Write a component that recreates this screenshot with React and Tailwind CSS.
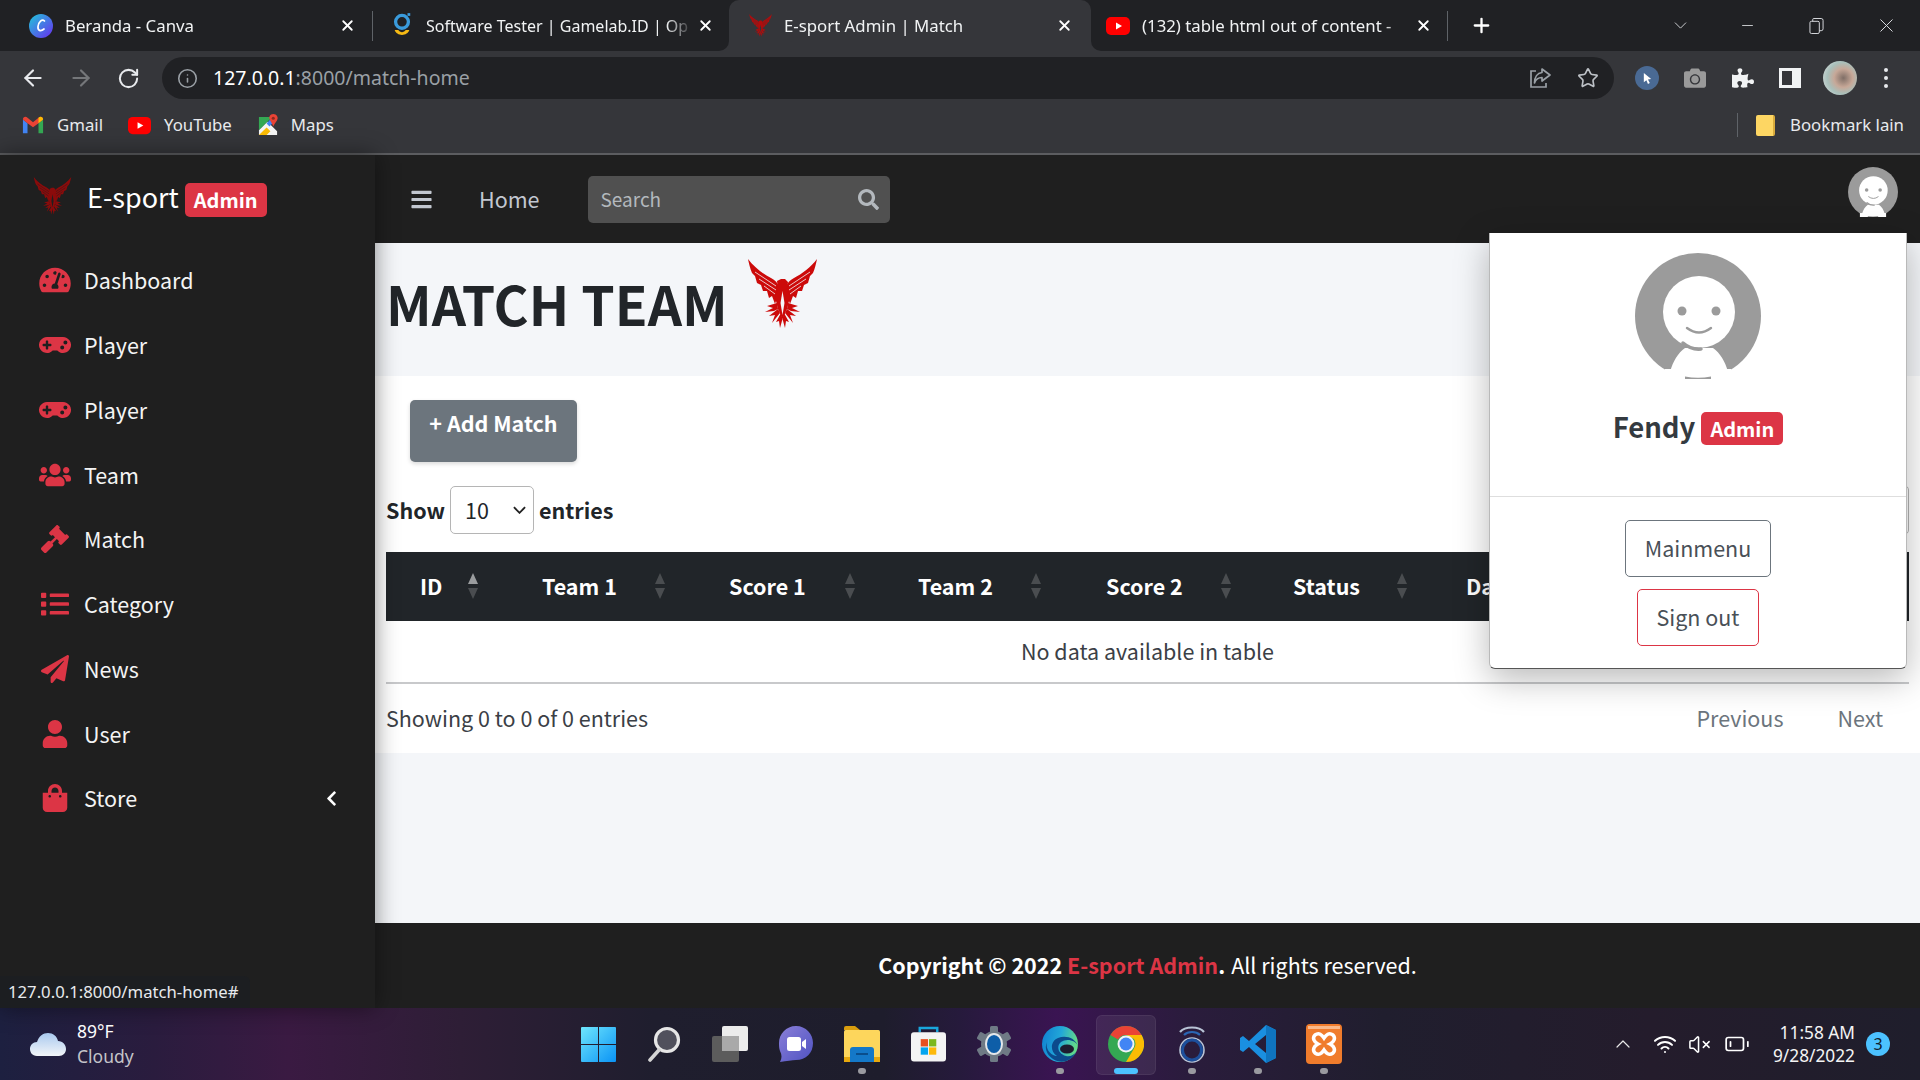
import {
  FaTachometerAlt, FaGamepad, FaUsers, FaGavel, FaList, FaPaperPlane, FaUser, FaShoppingBag,
  FaChevronLeft, FaBars, FaSearch, FaPuzzlePiece, FaCamera,
} from 'react-icons/fa';
import { ArrowLeft, ArrowRight, RotateCw, Info, Star, X, Plus, ChevronDown, Minus, Wifi, VolumeX, BatteryLow, ChevronUp } from 'lucide-react';

const MENU = [
  { label: 'Dashboard', icon: FaTachometerAlt },
  { label: 'Player', icon: FaGamepad },
  { label: 'Player', icon: FaGamepad },
  { label: 'Team', icon: FaUsers },
  { label: 'Match', icon: FaGavel },
  { label: 'Category', icon: FaList },
  { label: 'News', icon: FaPaperPlane },
  { label: 'User', icon: FaUser },
  { label: 'Store', icon: FaShoppingBag, arrow: true },
];

const COLUMNS = [
  { label: 'ID', w: 'w-[100px]', pl: 'pl-[34px]', active: true },
  { label: 'Team 1', w: 'w-[187px]', pl: 'pl-[56px]' },
  { label: 'Score 1', w: 'w-[190px]', pl: 'pl-[56px]' },
  { label: 'Team 2', w: 'w-[186px]', pl: 'pl-[55px]' },
  { label: 'Score 2', w: 'w-[190px]', pl: 'pl-[57px]' },
  { label: 'Status', w: 'w-[176px]', pl: 'pl-[54px]' },
  { label: 'Date', w: 'w-[176px]', pl: 'pl-[51px]' },
];

function Eagle({ color, slit, className }) {
  const wing = (
    <g>
      <path d="M0 0 C6 8 15 15 23 19 C27 21 30 24 31 28 L30 36 L27 45 L24 37 L21 39 L19 32 L15 32 L13 26 L9 24 L7 17 L4 14 C2 9 1 5 0 0Z" fill={color} />
      <path d="M7 13 L28 27 M11 20 L28 31 M16 27 L27 35" stroke={slit} strokeWidth="0.8" fill="none" />
      <path d="M29 44 L19 47 L25 49 L17 53 L26 52 L30 50Z" fill={color} />
      <path d="M30 50 L21 57 L27 56 L24 64 L32 54Z" fill={color} />
      <path d="M33 54 L28 63 L31 62 L32 69 L34.5 60Z" fill={color} />
    </g>
  );
  return (
    <svg viewBox="0 0 69 70" className={className}>
      {wing}
      <g transform="translate(69 0) scale(-1 1)">{wing}</g>
      <path d="M29 22 L33 20 L37 20 L40 23 L39 30 L42 38 L39 50 L34.5 60 L30 50 L27 38 L30 30Z" fill={color} />
      <path d="M34.5 32 L32.5 44 L34.5 56 L36.5 44Z" fill={slit} />
    </svg>
  );
}

function Avatar({ className }) {
  return (
    <svg viewBox="0 0 126 126" className={className}>
      <circle cx="63" cy="63" r="63" fill="#9b9b9b" />
      <path d="M35 119 C38 108 43 100 50 95 L78 95 C85 100 90 108 93 119 L96 126 L30 126Z" fill="#fff" />
      <path d="M30 116 L96 116 L96 126 L30 126Z" fill="#fff" />
      <path d="M50 123.5 Q63 126 76 123.5 L76 126 L50 126Z" fill="#9b9b9b" />
      <circle cx="64" cy="59" r="36" fill="#fff" />
      <circle cx="47" cy="58" r="4.5" fill="#9b9b9b" />
      <circle cx="81" cy="58" r="4.5" fill="#9b9b9b" />
      <path d="M52 75 Q64 84 76 75" stroke="#9b9b9b" strokeWidth="2.4" fill="none" strokeLinecap="round" />
      <path d="M48 90 Q56 97 66 96" stroke="#9b9b9b" strokeWidth="3.5" fill="none" strokeLinecap="round" />
    </svg>
  );
}

function Tab({ favicon, title, active, outer, inner, cornerL, cornerR, titleSize = 'text-[16.8px]' }) {
  return (
    <div className={`h-full bg-[#35363a] ${outer}`}>
      <div className={`h-full flex items-center ${active ? 'bg-[#35363a] rounded-t-[10px]' : 'bg-[#202124]'} ${cornerL ? 'rounded-bl-[10px]' : ''} ${cornerR ? 'rounded-br-[10px]' : ''} ${inner}`}>
        <span className="shrink-0 w-[24px] h-[24px] flex items-center justify-center">{favicon}</span>
        <span className={`ml-[12px] flex-1 whitespace-nowrap ${titleSize} text-[#f1f3f4] [mask-image:linear-gradient(to_right,black_90%,transparent_100%)]`}>{title}</span>
        <X className="shrink-0 ml-[4px] text-white" size={17} strokeWidth={2.6} />
      </div>
    </div>
  );
}

function SortIcon({ active }) {
  return (
    <svg viewBox="0 0 12 30" className="w-[12px] h-[30px] shrink-0 mr-[7px] mb-[2px]">
      <path d="M6 2 L11 13 L1 13Z" fill={active ? '#9a9c9e' : '#4a4d50'} />
      <path d="M1 17 L11 17 L6 28Z" fill="#4a4d50" />
    </svg>
  );
}

function CanvaIcon() {
  return (
    <svg viewBox="0 0 24 24" className="w-[24px] h-[24px]">
      <defs>
        <linearGradient id="canvaGrad" x1="0" y1="0" x2="1" y2="1">
          <stop offset="0" stopColor="#1fc8d9" />
          <stop offset="1" stopColor="#6a2cf0" />
        </linearGradient>
      </defs>
      <circle cx="12" cy="12" r="12" fill="url(#canvaGrad)" />
      <path d="M15.5 7 C13 4.5 9.5 8 9 12.5 C8.6 16.5 11.5 18 15 15" stroke="#fff" strokeWidth="1.7" fill="none" strokeLinecap="round" />
    </svg>
  );
}

function GamelabIcon() {
  return (
    <svg viewBox="0 0 24 26" className="w-[22px] h-[25px]">
      <circle cx="12" cy="9" r="7" stroke="#3a9bdc" strokeWidth="3.6" fill="none" />
      <path d="M18 1 L21 1" stroke="#3a9bdc" strokeWidth="3" />
      <path d="M4 18 C6 25 18 25 20 18 L16 18 C14 21 10 21 8 18Z" fill="#f5b914" />
    </svg>
  );
}

function YoutubeIcon({ small }) {
  return (
    <svg viewBox="0 0 24 24" className={small ? 'w-[23px] h-[23px]' : 'w-[24px] h-[24px]'}>
      <rect x="0" y="3" width="24" height="18" rx="5" fill="#f00" />
      <path d="M10 8.5 L16 12 L10 15.5Z" fill="#fff" />
    </svg>
  );
}

function GmailIcon() {
  return (
    <svg viewBox="0 0 24 20" className="w-[22px] h-[20px]">
      <path d="M1 4 L1 19 L6 19 L6 8Z" fill="#4285f4" />
      <path d="M18 8 L18 19 L23 19 L23 4Z" fill="#34a853" />
      <path d="M1 4 C1 1 4 0 6 2 L12 7 L18 2 C20 0 23 1 23 4 L18 8 L12 12.5 L6 8Z" fill="#ea4335" />
      <path d="M18 2 C20 0 23 1 23 4 L18 8Z" fill="#fbbc04" />
    </svg>
  );
}

function MapsIcon() {
  return (
    <svg viewBox="0 0 22 24" className="w-[21px] h-[23px]">
      <path d="M1 3 L15 3 L1 17Z" fill="#34a853" />
      <path d="M1 17 L10 8 L20 18 L20 22 L1 22Z" fill="#f5f5f5" />
      <path d="M1 22 L9 14 L13 18 L9 22Z" fill="#fbbc04" />
      <path d="M9 10 L15 3 L15 10 L12 13Z" fill="#4285f4" />
      <path d="M16 0 C12.5 0 11.5 3 12 5 C13 8 15 10 16 13 C17 10 20 8 20.5 5 C21 3 19.5 0 16 0Z" fill="#ea4335" />
      <circle cx="16" cy="4.5" r="1.6" fill="#8c2a20" />
    </svg>
  );
}

function ShareIcon() {
  return (
    <svg viewBox="0 0 24 24" className="ml-auto w-[24px] h-[24px]" fill="none" stroke="#9aa0a6" strokeWidth="1.7">
      <path d="M8 5 H3 V21 H18 V17" />
      <path d="M14 3 L22 9 L14 15 V11.5 C10 11.5 7.5 14 6.5 17 C6.5 11 9.5 7 14 6.5Z" strokeLinejoin="round" />
    </svg>
  );
}

function WindowsIcon() {
  return (
    <svg viewBox="0 0 35 35" className="w-[35px] h-[35px]">
      <defs>
        <linearGradient id="winGrad" x1="0" y1="0" x2="1" y2="1">
          <stop offset="0" stopColor="#6fe6fd" />
          <stop offset="1" stopColor="#0a93f5" />
        </linearGradient>
      </defs>
      <path d="M1 0 H17 V17 H0 V1 Q0 0 1 0Z M18 0 H34 Q35 0 35 1 V17 H18Z M0 18 H17 V35 H1 Q0 35 0 34Z M18 18 H35 V34 Q35 35 34 35 H18Z" fill="url(#winGrad)" />
    </svg>
  );
}

function SearchTaskIcon() {
  return (
    <svg viewBox="0 0 34 36" className="w-[34px] h-[36px]">
      <circle cx="20" cy="14" r="11.5" fill="#50505c" stroke="#e6e6e6" strokeWidth="3.2" />
      <path d="M12 24 L3 34" stroke="#d5d5d5" strokeWidth="3.6" strokeLinecap="round" />
    </svg>
  );
}

function TaskViewIcon() {
  return (
    <svg viewBox="0 0 36 36" className="w-[36px] h-[36px]">
      <rect x="0" y="10" width="27" height="26" rx="2" fill="#5c5c5c" />
      <rect x="10" y="0" width="26" height="25" rx="2" fill="#ececec" />
      <rect x="10" y="10" width="17" height="15" fill="#a9a9a9" />
    </svg>
  );
}

function ChatIcon() {
  return (
    <svg viewBox="0 0 34 36" className="w-[34px] h-[36px]">
      <defs>
        <linearGradient id="chatGrad" x1="0" y1="0" x2="1" y2="1">
          <stop offset="0" stopColor="#8a7fd8" />
          <stop offset="1" stopColor="#4f52c2" />
        </linearGradient>
      </defs>
      <path d="M17 0 C27 0 34 8 34 17 C34 27 27 34 17 34 C13 34 8 35 1 36 C3 32 3 29 1 25 C0 22 0 20 0 17 C0 8 7 0 17 0Z" fill="url(#chatGrad)" />
      <rect x="8" y="11" width="14" height="14" rx="2.5" fill="#fff" />
      <path d="M23 16 L27 13 V23 L23 20Z" fill="#fff" />
    </svg>
  );
}

function ExplorerIcon() {
  return (
    <svg viewBox="0 0 36 36" className="w-[36px] h-[36px]">
      <path d="M0 2 Q0 0 2 0 H11 L16 4 H0Z" fill="#d99d0e" />
      <rect x="0" y="4" width="36" height="31" rx="1.5" fill="#fdd65c" />
      <rect x="0" y="31" width="36" height="5" fill="#e8a90e" />
      <path d="M6 24 Q6 21 9 21 H27 Q30 21 30 24 V36 H6Z" fill="#1478c8" />
      <rect x="12" y="27" width="12" height="2" fill="#0a4e8c" />
    </svg>
  );
}

function StoreIcon() {
  return (
    <svg viewBox="0 0 36 36" className="w-[35px] h-[36px]">
      <path d="M9 6 V1.5 H27 V6" stroke="#19a7dd" strokeWidth="2.5" fill="none" />
      <rect x="0" y="6" width="36" height="30" rx="3" fill="#f4f4f4" />
      <rect x="10" y="13" width="7.5" height="7.5" fill="#e8501f" />
      <rect x="18.5" y="13" width="7.5" height="7.5" fill="#7cb81f" />
      <rect x="10" y="21.5" width="7.5" height="7.5" fill="#04a5ef" />
      <rect x="18.5" y="21.5" width="7.5" height="7.5" fill="#fdb90b" />
    </svg>
  );
}

function SettingsIcon() {
  return (
    <svg viewBox="0 0 36 36" className="w-[36px] h-[36px]">
      <circle cx="18" cy="18" r="13" fill="#6f7a85" />
      <g fill="#6f7a85">
        <rect x="14" y="0" width="8" height="8" rx="1.5" />
        <rect x="14" y="28" width="8" height="8" rx="1.5" />
        <rect x="14" y="0" width="8" height="8" rx="1.5" transform="rotate(60 18 18)" />
        <rect x="14" y="0" width="8" height="8" rx="1.5" transform="rotate(120 18 18)" />
        <rect x="14" y="0" width="8" height="8" rx="1.5" transform="rotate(240 18 18)" />
        <rect x="14" y="0" width="8" height="8" rx="1.5" transform="rotate(300 18 18)" />
      </g>
      <ellipse cx="18" cy="18" rx="8" ry="10" fill="#0e5ea8" stroke="#e4e7ea" strokeWidth="2" />
    </svg>
  );
}

function EdgeIcon() {
  return (
    <svg viewBox="0 0 36 36" className="w-[36px] h-[36px]">
      <defs>
        <linearGradient id="edgeGrad" x1="0" y1="0" x2="1" y2="0.2">
          <stop offset="0" stopColor="#0f7fd2" />
          <stop offset="0.55" stopColor="#22a7d8" />
          <stop offset="1" stopColor="#62d98a" />
        </linearGradient>
      </defs>
      <circle cx="18" cy="18" r="18" fill="url(#edgeGrad)" />
      <path d="M36 20 C34 14 24 12 19 16 C14 20 16 28 24 30 C28 31 32 29 34 26 C31 34 20 39 11 33 C5 29 2 22 5 16 C3 23 9 30 15 30 C8 26 8 15 16 12 C24 9 33 12 36 20Z" fill="#0c4a8c" />
      <ellipse cx="25" cy="23" rx="7" ry="4.5" fill="#1e1c30" />
    </svg>
  );
}

function ChromeIcon() {
  return (
    <svg viewBox="0 0 36 36" className="w-[36px] h-[36px]">
      <circle cx="18" cy="18" r="18" fill="#34a853" />
      <path d="M18 0 A18 18 0 0 1 33.6 9 L18 9 A9 9 0 0 0 10 13.5 L2.4 9 A18 18 0 0 1 18 0Z" fill="#ea4335" />
      <path d="M33.6 9 A18 18 0 0 1 18 36 L26 22.5 A9 9 0 0 0 26 13 L18 9Z" fill="#fbbc04" />
      <circle cx="18" cy="18" r="8.5" fill="#f1f3f4" />
      <circle cx="18" cy="18" r="6.5" fill="#4285f4" />
    </svg>
  );
}

function CortexIcon() {
  return (
    <svg viewBox="0 0 30 38" className="w-[30px] h-[38px]">
      <path d="M3 7 C8 1 22 1 27 7" stroke="#b9c4d6" strokeWidth="2.2" fill="none" />
      <path d="M7 10 C11 6 19 6 23 10" stroke="#2a66b4" strokeWidth="2.2" fill="none" />
      <ellipse cx="15" cy="25" rx="12" ry="12" stroke="#b9c4d6" strokeWidth="1.6" fill="none" />
      <ellipse cx="15" cy="25" rx="9.5" ry="10" stroke="#1c4f9c" strokeWidth="3" fill="none" />
    </svg>
  );
}

function VscodeIcon() {
  return (
    <svg viewBox="0 0 36 38" className="w-[36px] h-[38px]">
      <path d="M26 0 L36 5 V33 L26 38 L9 22 L3 27 L0 25 V13 L3 11 L9 16Z M26 10 L15 19 L26 28Z" fill="#1a8fe0" />
      <path d="M26 0 L36 5 V33 L26 38Z" fill="#0f74bf" />
    </svg>
  );
}

function XamppIcon() {
  return (
    <svg viewBox="0 0 36 40" className="w-[36px] h-[40px]">
      <rect x="0" y="0" width="36" height="40" rx="4" fill="#f07c2c" />
      <rect x="2" y="2" width="32" height="3" fill="#f9b98a" />
      <path d="M9 11 C13 8 16 11 18 14 C20 11 23 8 27 11 C30 14 28 18 24 20 C28 22 30 26 27 29 C23 32 20 29 18 26 C16 29 13 32 9 29 C6 26 8 22 12 20 C8 18 6 14 9 11Z" stroke="#fff" strokeWidth="3.5" fill="none" />
    </svg>
  );
}

const TASK_ICONS = [
  { el: <WindowsIcon /> },
  { el: <SearchTaskIcon /> },
  { el: <TaskViewIcon /> },
  { el: <ChatIcon /> },
  { el: <ExplorerIcon />, dot: true },
  { el: <StoreIcon /> },
  { el: <SettingsIcon /> },
  { el: <EdgeIcon />, dot: true },
  { el: <ChromeIcon />, running: true },
  { el: <CortexIcon />, dot: true },
  { el: <VscodeIcon />, dot: true },
  { el: <XamppIcon />, dot: true },
];

function TabStrip() {
  return (
    <div className="h-[51px] bg-[#202124] flex items-stretch font-['Noto_Sans',sans-serif] shrink-0">
      <Tab outer="w-[372px]" inner="pl-[29px] pr-[16px]" favicon={<CanvaIcon />} title="Beranda - Canva" />
      <div className="w-px h-[30px] my-auto bg-[#5f6368]" />
      <Tab outer="w-[356px]" inner="pl-[17px] pr-[15px]" favicon={<GamelabIcon />} title="Software Tester | Gamelab.ID | Op" titleSize="text-[16px]" cornerR />
      <Tab active outer="w-[362px] bg-[#202124]" inner="pl-[19px] pr-[18px]" favicon={<Eagle color="#b00d0d" slit="#35363a" className="w-[23px] h-[23px]" />} title="E-sport Admin | Match" />
      <Tab outer="w-[356px]" inner="pl-[15px] pr-[15px]" favicon={<YoutubeIcon />} title="(132) table html out of content -" cornerL />
      <div className="w-px h-[30px] my-auto bg-[#5f6368]" />
      <div className="flex items-center pl-[22px]">
        <Plus className="text-white" size={23} strokeWidth={2.4} />
      </div>
      <div className="ml-auto flex items-center text-[#dfe1e5]">
        <ChevronDown className="mr-[48px]" size={21} strokeWidth={1} />
        <Minus className="mr-[53px]" size={17} strokeWidth={1.2} />
        <svg viewBox="0 0 16 18" className="w-[15px] h-[18px] mr-[51px]" fill="none" stroke="currentColor" strokeWidth="1">
          <rect x="1" y="4" width="10" height="13" rx="1.5" />
          <path d="M4 4 V2 Q4 1 5 1 H13 Q15 1 15 3 V12 Q15 14 13 14 H11" />
        </svg>
        <X className="mr-[22px]" size={23} strokeWidth={1} />
      </div>
    </div>
  );
}

function Toolbar() {
  return (
    <div className="h-[52px] pt-[2px] bg-[#35363a] flex items-center shrink-0 font-['Noto_Sans',sans-serif]">
      <ArrowLeft className="ml-[20px] text-[#e8eaed]" size={26} strokeWidth={2} />
      <ArrowRight className="ml-[22px] text-[#75777a]" size={26} strokeWidth={2} />
      <RotateCw className="ml-[23px] text-[#e8eaed]" size={23} strokeWidth={2.1} />
      <div className="ml-[22px] w-[1452px] h-[42px] rounded-full bg-[#202124] flex items-center">
        <Info className="ml-[15px] text-[#9aa0a6]" size={21} strokeWidth={1.8} />
        <span className="ml-[15px] text-[19.5px] text-white leading-none">
          127.0.0.1<span className="text-[#9aa0a6]">:8000/match-home</span>
        </span>
        <ShareIcon />
        <Star className="ml-[25px] mr-[15px] text-[#bdc1c6]" size={22} strokeWidth={1.8} />
      </div>
      <div className="ml-[21px] w-[24px] h-[24px] rounded-full bg-[#4a6a94] flex items-center justify-center">
        <svg viewBox="0 0 12 14" className="w-[11px] h-[13px]"><path d="M2 1 L10 7.5 L6.5 8 L8.5 12 L6.5 13 L4.8 9 L2 11Z" fill="#fff" /></svg>
      </div>
      <FaCamera className="ml-[25px] text-[#9a9a9a]" size={22} />
      <FaPuzzlePiece className="ml-[26px] text-[#f1f3f4]" size={22} />
      <div className="ml-[25px] w-[22px] h-[20px] border-[3px] border-r-[9px] border-[#f1f3f4] bg-[#35363a]" />
      <div className="ml-[22px] w-[34px] h-[34px] rounded-full bg-[radial-gradient(circle_at_60%_50%,#7f6e66_0%,#c7a898_35%,#a9c0bb_60%,#e4e4e4_100%)]" />
      <div className="ml-[27px] flex flex-col gap-[4px]">
        <span className="w-[4px] h-[4px] rounded-full bg-[#e8eaed]" />
        <span className="w-[4px] h-[4px] rounded-full bg-[#e8eaed]" />
        <span className="w-[4px] h-[4px] rounded-full bg-[#e8eaed]" />
      </div>
    </div>
  );
}

function BookmarkBar() {
  return (
    <div className="h-[44px] pb-[6px] bg-[#35363a] flex items-center text-[16.8px] text-[#e8eaed] shrink-0 font-['Noto_Sans',sans-serif] border-b-2 border-[#5c5d60] box-content">
      <span className="ml-[22px]"><GmailIcon /></span>
      <span className="ml-[13px]">Gmail</span>
      <span className="ml-[25px]"><YoutubeIcon small /></span>
      <span className="ml-[13px]">YouTube</span>
      <span className="ml-[26px]"><MapsIcon /></span>
      <span className="ml-[12px]">Maps</span>
      <div className="ml-auto w-px h-[24px] bg-[#5f6368]" />
      <div className="ml-[18px] w-[19px] h-[21px] bg-[#fdd663] rounded-[2px] border-r-2 border-[#d8ab3c]" />
      <span className="ml-[15px] mr-[16px]">Bookmark lain</span>
    </div>
  );
}

function Sidebar() {
  return (
    <aside className="w-[375px] shrink-0 bg-[#1f1f1f] flex flex-col z-10 shadow-[0_0_22px_rgba(0,0,0,0.45)]">
      <div className="h-[93px] shrink-0 flex items-start pt-[22px] pl-[33px]">
        <Eagle color="#8b0b0b" slit="#1f1f1f" className="w-[39px] h-[38px]" />
        <span className="ml-[15px] text-[27px] leading-[40px] text-white">E-sport</span>
        <span className="ml-[6px] mt-[6px] h-[34px] w-[82px] rounded-[5px] bg-[#dc3545] text-white font-bold text-[20px] leading-[34px] text-center">Admin</span>
      </div>
      {MENU.map((item, i) => (
        <div key={i} className="h-[64.75px] shrink-0 flex items-center">
          <span className="w-[84px] pl-[39px] shrink-0 flex items-center">
            <item.icon className="text-[#dc3545] w-[32px] h-[28px]" />
          </span>
          <span className="text-[21.5px] text-[#f4f4f4]">{item.label}</span>
          {item.arrow && <FaChevronLeft className="ml-auto mr-[35px] text-white" size={17} />}
        </div>
      ))}
    </aside>
  );
}

function TopNav() {
  return (
    <div className="h-[88px] shrink-0 bg-[#1f1f1f] flex items-center">
      <FaBars className="ml-[35px] text-[#c2c7d0]" size={23} />
      <span className="ml-[46px] text-[21.5px] text-[#c2c7d0]">Home</span>
      <div className="ml-[48px] w-[302px] h-[47px] rounded-[5px] bg-[#505050] flex items-center pl-[13px] pr-[11px]">
        <span className="text-[19px] text-[#b3b8bd]">Search</span>
        <FaSearch className="ml-auto text-[#b3b8bd]" size={21} />
      </div>
      <Avatar className="ml-auto mr-[22px] w-[50px] h-[50px] -mt-[14px]" />
    </div>
  );
}

function MatchTable() {
  return (
    <div className="mt-[18px] mx-[11px] overflow-hidden">
      <div className="h-[69px] bg-[#212529] flex items-center text-white font-bold text-[21.5px]">
        {COLUMNS.map(col => (
          <div key={col.label} className={`${col.w} shrink-0 ${col.pl} flex items-center justify-between`}>
            <span>{col.label}</span>
            <SortIcon active={col.active} />
          </div>
        ))}
      </div>
      <div className="h-[63px] border-b-2 border-[#c8c9cb] flex items-center justify-center text-[21.5px] text-[#3b4046]">
        No data available in table
      </div>
    </div>
  );
}

function Card() {
  return (
    <div className="h-[377px] shrink-0 bg-white flex flex-col text-[#212529]">
      <button className="ml-[35px] mt-[24px] w-[167px] h-[62px] shrink-0 rounded-[5px] bg-[#6c757d] text-white font-bold text-[21.5px] pb-[16px] leading-[1.2] shadow-[0_2px_4px_rgba(0,0,0,0.15)]">
        + Add Match
      </button>
      <div className="mt-[24px] mx-[11px] h-[48px] shrink-0 flex items-center font-bold text-[21.5px]">
        <span>Show</span>
        <span className="mx-[5px] w-[84px] h-[48px] rounded-[5px] border border-[#b5b5b5] bg-white flex items-center pl-[14px] font-normal">
          10
          <svg viewBox="0 0 14 8" className="ml-auto mr-[7px] w-[13px] h-[8px]"><path d="M1 1 L7 7 L13 1" stroke="#222" strokeWidth="2" fill="none" /></svg>
        </span>
        <span>entries</span>
        <span className="ml-auto w-[240px] h-[50px] rounded-[5px] border border-[#b5b5b5]" />
      </div>
      <MatchTable />
      <div className="h-[69px] mx-[11px] shrink-0 flex items-center text-[21.5px] text-[#3b4046]">
        <span>Showing 0 to 0 of 0 entries</span>
        <span className="ml-auto text-[#6c757d]">Previous</span>
        <span className="ml-[54px] mr-[26px] text-[#6c757d]">Next</span>
      </div>
    </div>
  );
}

function ProfilePopup() {
  return (
    <div className="absolute left-[1489px] top-[233px] w-[418px] h-[436px] bg-white rounded-b-[6px] border-x border-b border-[#b9b9b9] border-b-[#555] shadow-[0_10px_35px_rgba(0,0,0,0.28)] flex flex-col items-center z-20">
      <Avatar className="mt-[20px] w-[126px] h-[126px] shrink-0" />
      <div className="mt-[30px] flex items-center h-[36px]">
        <span className="text-[27.5px] font-bold text-[#343a40]">Fendy</span>
        <span className="ml-[6px] mt-[3px] w-[82px] h-[33px] rounded-[5px] bg-[#dc3545] text-white font-bold text-[20px] leading-[33px] text-center">Admin</span>
      </div>
      <div className="mt-[51px] w-full h-px bg-[#dedede] shrink-0" />
      <button className="mt-[23px] w-[146px] h-[57px] shrink-0 rounded-[5px] border border-[#6c757d] text-[#495057] text-[21.5px]">Mainmenu</button>
      <button className="mt-[12px] w-[122px] h-[57px] shrink-0 rounded-[5px] border border-[#dc3545] text-[#495057] text-[21.5px]">Sign out</button>
    </div>
  );
}

function Taskbar() {
  return (
    <div className="h-[72px] shrink-0 flex items-center text-white font-['Noto_Sans',sans-serif] bg-[linear-gradient(90deg,#1d2040_0%,#2a1c3e_8%,#3a1a42_15%,#2e1e36_24%,#1f1e2e_34%,#1e1d2c_46%,#261a3c_50%,#3a1452_55%,#2a1c3c_62%,#201e2e_72%,#241c2c_86%,#1f1e2c_100%)]">
      <div className="w-[565px] shrink-0 flex items-center pl-[30px]">
        <svg viewBox="0 0 36 24" className="w-[36px] h-[24px]">
          <defs>
            <linearGradient id="cloudGrad" x1="0" y1="0" x2="0" y2="1">
              <stop offset="0" stopColor="#a9c9ef" />
              <stop offset="1" stopColor="#f2f5f8" />
            </linearGradient>
          </defs>
          <path d="M7 24 C2 24 0 20 0 17 C0 13 3 10 7 10 C9 4 13 1 18 1 C23 1 27 4 28 9 C33 9 36 13 36 17 C36 21 33 24 29 24Z" fill="url(#cloudGrad)" />
        </svg>
        <div className="ml-[11px] flex flex-col leading-[25px] text-[17.5px]">
          <span>89°F</span>
          <span className="text-[#c4c4c9]">Cloudy</span>
        </div>
      </div>
      <div className="flex items-stretch h-full">
        {TASK_ICONS.map((t, i) => (
          <div key={i} className="w-[66px] relative flex items-center justify-center">
            {t.running && <div className="absolute left-[3px] right-[3px] top-[7px] bottom-[5px] rounded-[6px] bg-[#ffffff12] border border-[#ffffff10]" />}
            <div className="relative">{t.el}</div>
            {t.dot && <div className="absolute bottom-[6px] left-[29px] w-[8px] h-[6px] rounded-full bg-[#9a9aa0]" />}
            {t.running && <div className="absolute bottom-[6px] left-[21px] w-[24px] h-[6px] rounded-full bg-[#4cc2ff]" />}
          </div>
        ))}
      </div>
      <div className="ml-auto flex items-center">
        <ChevronUp size={24} strokeWidth={1.2} className="text-[#e8e8e8]" />
        <Wifi className="ml-[18px]" size={24} strokeWidth={2} />
        <VolumeX className="ml-[11px]" size={23} strokeWidth={1.6} />
        <BatteryLow className="ml-[13px]" size={26} strokeWidth={1.6} />
        <div className="ml-[23px] flex flex-col items-end text-[17.3px] leading-[23px] text-[#f4f4f4]">
          <span>11:58 AM</span>
          <span>9/28/2022</span>
        </div>
        <div className="ml-[11px] mr-[30px] w-[24px] h-[24px] rounded-full bg-[#4cc2ff] text-[#10202c] text-[16px] leading-[24px] text-center">3</div>
      </div>
    </div>
  );
}

export default function App() {
  return (
    <div className="relative w-[1920px] h-[1080px] overflow-hidden flex flex-col font-['Noto_Sans_CJK_SC',sans-serif]">
      <TabStrip />
      <Toolbar />
      <BookmarkBar />
      <div className="flex-1 flex min-h-0">
        <Sidebar />
        <main className="flex-1 flex flex-col bg-[#f4f6f9] min-w-0">
          <TopNav />
          <div className="h-[133px] shrink-0 flex items-start pl-[11px]">
            <h1 className="text-[53.5px] font-bold text-[#212529] leading-none mt-[33px]">MATCH TEAM</h1>
            <Eagle color="#cc0a0a" slit="#f4f6f9" className="ml-[20px] w-[69px] h-[70px] mt-[16px]" />
          </div>
          <Card />
          <div className="flex-1" />
          <footer className="h-[85px] shrink-0 bg-[#1f1f1f] flex items-center justify-center text-[21.5px] text-white">
            <b>Copyright © 2022 <span className="text-[#dc3545]">E-sport Admin</span>.</b>
            <span className="ml-[6px]">All rights reserved.</span>
          </footer>
        </main>
      </div>
      <Taskbar />
      <ProfilePopup />
      <div className="absolute left-0 top-[976px] w-[250px] h-[32px] bg-[#1c1e21] rounded-tr-[6px] z-30 font-['Noto_Sans',sans-serif] text-[16.7px] leading-[32px] pl-[8px] text-[#e8eaed]">
        127.0.0.1:8000/match-home#
      </div>
    </div>
  );
}
